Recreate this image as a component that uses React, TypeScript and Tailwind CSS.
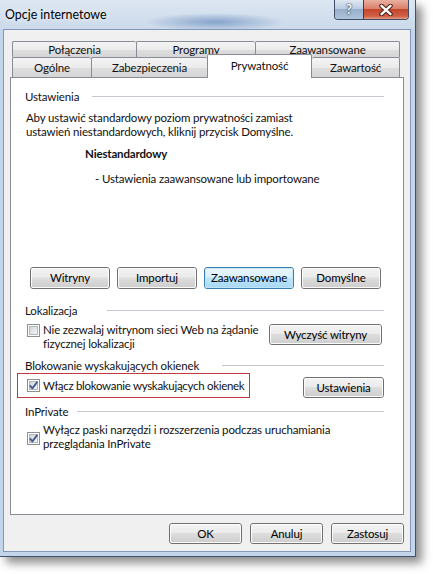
import React from "react";

type BtnProps = { label: string; className?: string; focused?: boolean };

function Button({ label, className = "", focused = false }: BtnProps) {
  const outer = focused ? "border-[#3c7fb1]" : "border-[#707070]";
  const inner = focused
    ? "border-[#c4e5f7] bg-[linear-gradient(#eaf6fd_0%,#d9f0fc_45%,#bee6fd_50%,#a7d9f5_100%)]"
    : "border-[#fbfbfb] bg-[linear-gradient(#f2f2f2_0%,#ebebeb_45%,#dddddd_50%,#cfcfcf_100%)]";
  return (
    <div className={`shrink-0 rounded-[3px] border ${outer} ${className}`}>
      <div className={`flex h-full items-center justify-center rounded-[2px] border ${inner} leading-none text-black`}>
        {label}
      </div>
    </div>
  );
}

function Checkbox({ checked }: { checked?: boolean }) {
  return (
    <svg width="13" height="13" viewBox="0 0 13 13" className="shrink-0">
      <defs>
        <linearGradient id="cbfill" x1="0" y1="0" x2="1" y2="1">
          <stop offset="0" stopColor="#cfd3d8" />
          <stop offset="1" stopColor="#f7f7f7" />
        </linearGradient>
      </defs>
      <rect x="0.5" y="0.5" width="12" height="12" fill="#fff" stroke="#8e8f8f" />
      <rect x="2.5" y="2.5" width="8" height="8" fill="url(#cbfill)" stroke="#b3b8bf" />
      {checked && (
        <path d="M2.8 6.4 L5.4 9.4 L10.4 2.8" fill="none" stroke="#465a8e" strokeWidth="1.9" strokeLinejoin="round" />
      )}
    </svg>
  );
}

function GroupLabel({ label, labelW, className = "" }: { label: string; labelW: string; className?: string }) {
  return (
    <div className={`flex items-center leading-[15px] ${className}`}>
      <span className={`shrink-0 whitespace-nowrap ${labelW}`}>{label}</span>
      <div className="h-px flex-1 bg-[#c4c8ce]" />
    </div>
  );
}

function Tab({ label, className = "" }: { label: string; className?: string }) {
  return (
    <div
      className={`flex shrink-0 items-center justify-center rounded-t-[2px] border-t border-l border-[#898c95] bg-[linear-gradient(#f4f4f4_0%,#ebebeb_50%,#dedede_51%,#d6d6d6_100%)] leading-none ${className}`}
    >
      {label}
    </div>
  );
}

export default function App() {
  return (
    <div className="h-[574px] w-[433px] overflow-hidden bg-white font-['Lato','Noto_Sans',sans-serif] text-[11.5px] tracking-[-0.15px] text-[#111]">
      <div className="flex h-[557px] w-[416px] flex-col border-r border-b border-[#41536b] bg-[#c2d5eb] shadow-[6px_6px_9px_rgba(0,0,0,0.45)]">
        {/* title bar */}
        <div className="flex h-[29px] shrink-0 justify-between bg-[radial-gradient(ellipse_70px_9px_at_215px_22px,#86a4cb,transparent),linear-gradient(#dde7f3,#cbd9ea)]">
          <span className="pl-[5px] pt-[7px] text-[12.4px] leading-[16px] tracking-normal text-black [text-shadow:0_0_6px_#ffffff]">
            Opcje internetowe
          </span>
          <div className="mr-[6px] flex h-[20px] overflow-hidden rounded-b-[4px] border border-t-0 border-[#3f4e63]">
            <div className="flex w-[28px] items-center justify-center bg-[linear-gradient(#dfe8f2_0%,#bccde1_45%,#98afcc_50%,#aec3db_100%)] text-[13px] font-bold leading-none text-white [text-shadow:0_0_2px_#1d3050,0_0_1px_#1d3050]">
              ?
            </div>
            <div className="flex w-[45px] items-center justify-center border-l border-[#4a3a3a] bg-[linear-gradient(#eab0a2_0%,#d9806a_45%,#c4462c_50%,#cf5f45_85%,#e59a82_100%)]">
              <svg width="14" height="12" viewBox="0 0 14 12">
                <path d="M2.5 1.8 L11.5 10.2 M11.5 1.8 L2.5 10.2" stroke="#4b1f17" strokeWidth="4.4" strokeLinecap="round" />
                <path d="M2.5 1.8 L11.5 10.2 M11.5 1.8 L2.5 10.2" stroke="#ffffff" strokeWidth="2.4" strokeLinecap="round" />
              </svg>
            </div>
          </div>
        </div>

        {/* client area */}
        <div className="mb-[4px] ml-[3px] mr-[4px] flex flex-1 flex-col border border-[#8197b5] bg-[#f0f0f0] px-[6px] pt-[11px]">
          {/* tabs */}
          <div className="ml-[2px] flex h-[16px] w-[388px]">
            <Tab label="Połączenia" className="w-[124px]" />
            <Tab label="Programy" className="w-[119px]" />
            <Tab label="Zaawansowane" className="flex-1 border-r" />
          </div>
          <div className="ml-[2px] flex h-[20px] w-[388px] items-end">
            <Tab label="Ogólne" className="h-[20px] w-[79px]" />
            <Tab label="Zabezpieczenia" className="h-[20px] w-[116px]" />
            <div className="relative z-10 -mb-px flex h-[24px] w-[105px] shrink-0 justify-center rounded-t-[2px] border-x border-t border-[#898c95] bg-white pt-[3px] leading-[15px]">
              Prywatność
            </div>
            <Tab label="Zawartość" className="h-[20px] flex-1 border-r border-l-0" />
          </div>

          {/* panel */}
          <div className="flex h-[438px] flex-col border border-[#898c95] bg-white pl-[14px] pr-[19px] pt-[11px]">
            <GroupLabel label="Ustawienia" labelW="w-[67px]" />
            <p className="ml-px mt-[7px] whitespace-nowrap leading-[14px]">
              Aby ustawić standardowy poziom prywatności zamiast
              <br />
              ustawień niestandardowych, kliknij przycisk Domyślne.
            </p>
            <p className="ml-[60px] mt-[7px] font-bold leading-[15px]">Niestandardowy</p>
            <p className="ml-[70px] mt-[10px] leading-[15px]">- Ustawienia zaawansowane lub importowane</p>

            <div className="ml-[5px] mt-[81px] flex gap-[7px]">
              <Button label="Witryny" className="h-[22px] w-[80px]" />
              <Button label="Importuj" className="h-[22px] w-[80px]" />
              <Button label="Zaawansowane" className="h-[22px] w-[90px]" focused />
              <Button label="Domyślne" className="h-[22px] w-[80px]" />
            </div>

            <GroupLabel label="Lokalizacja" labelW="w-[82px]" className="mt-[14px]" />
            <div className="mt-[5px] flex items-start justify-between">
              <div className="flex items-start">
                <div className="ml-[2px] mt-[1px]">
                  <Checkbox />
                </div>
                <p className="ml-[3px] whitespace-nowrap leading-[14px]">
                  Nie zezwalaj witrynom sieci Web na żądanie
                  <br />
                  fizycznej lokalizacji
                </p>
              </div>
              <Button label="Wyczyść witryny" className="mr-[2px] mt-px h-[21px] w-[113px]" />
            </div>

            <GroupLabel label="Blokowanie wyskakujących okienek" labelW="w-[197px]" className="mt-[7px]" />
            <div className="flex items-end justify-between">
              <div className="-ml-[8px] flex h-[25px] w-[233px] shrink-0 items-center border border-[#c23a3f] pl-[9px]">
                <Checkbox checked />
                <span className="ml-[3px] whitespace-nowrap leading-[15px] tracking-[-0.3px]">
                  Włącz blokowanie wyskakujących okienek
                </span>
              </div>
              <Button label="Ustawienia" className="h-[21px] w-[81px]" />
            </div>

            <GroupLabel label="InPrivate" labelW="w-[52px]" className="mt-[6px]" />
            <div className="mt-[4px] flex items-center">
              <div className="ml-[2px] mt-[2px]">
                <Checkbox checked />
              </div>
              <p className="ml-[3px] whitespace-nowrap leading-[14px]">
                Wyłącz paski narzędzi i rozszerzenia podczas uruchamiania
                <br />
                przeglądania InPrivate
              </p>
            </div>
          </div>

          {/* dialog buttons */}
          <div className="mt-[8px] flex justify-end gap-[8px]">
            <Button label="OK" className="h-[21px] w-[73px]" />
            <Button label="Anuluj" className="h-[21px] w-[73px]" />
            <Button label="Zastosuj" className="h-[21px] w-[73px]" />
          </div>
        </div>
      </div>
    </div>
  );
}
